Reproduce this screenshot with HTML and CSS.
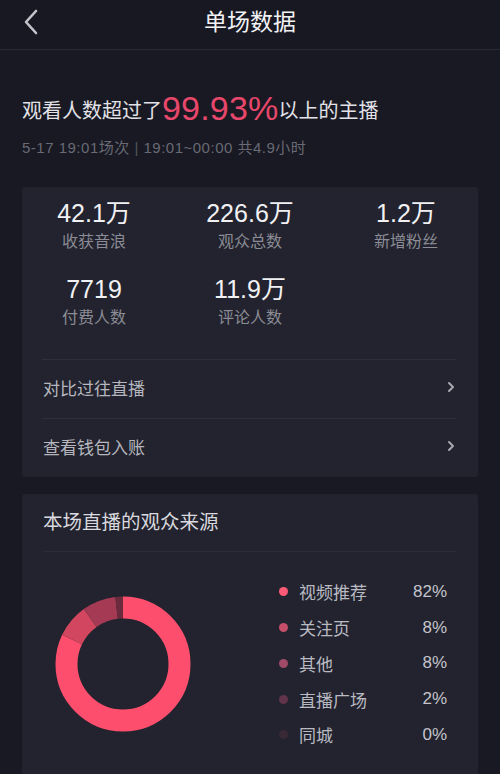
FILE: index.html
```html
<!DOCTYPE html>
<html lang="zh-CN">
<head>
<meta charset="utf-8">
<title>单场数据</title>
<link rel="stylesheet" href="styles.css">
</head>
<body>
<header class="topbar">
  <div class="back">
    <svg width="16" height="26" viewBox="0 0 16 26"><path d="M13 2 L3 13 L13 24" fill="none" stroke="#c4c5cc" stroke-width="2.6" stroke-linecap="round" stroke-linejoin="round"/></svg>
  </div>
  <h1 class="title">单场数据</h1>
  <div></div>
</header>

<section class="summary">
  <p class="headline">观看人数超过了<span class="pct">99.93%</span>以上的主播</p>
  <p class="sub">5-17 19:01场次 <span class="sep">|</span> 19:01~00:00 共4.9小时</p>
</section>

<section class="card">
  <div class="stats">
    <div class="stat"><div class="val">42.1万</div><div class="lab">收获音浪</div></div>
    <div class="stat"><div class="val">226.6万</div><div class="lab">观众总数</div></div>
    <div class="stat"><div class="val">1.2万</div><div class="lab">新增粉丝</div></div>
    <div class="stat"><div class="val">7719</div><div class="lab">付费人数</div></div>
    <div class="stat"><div class="val">11.9万</div><div class="lab">评论人数</div></div>
  </div>
  <div class="item"><span>对比过往直播</span>
    <svg class="chev" width="8" height="12" viewBox="0 0 8 12"><path d="M2 2 L6 6 L2 10" fill="none" stroke="#a7a8b0" stroke-width="2" stroke-linecap="round" stroke-linejoin="round"/></svg>
  </div>
  <div class="item"><span>查看钱包入账</span>
    <svg class="chev" width="8" height="12" viewBox="0 0 8 12"><path d="M2 2 L6 6 L2 10" fill="none" stroke="#a7a8b0" stroke-width="2" stroke-linecap="round" stroke-linejoin="round"/></svg>
  </div>
</section>

<section class="card card2">
  <div class="card-title">本场直播的观众来源</div>
  <div class="chart">
    <svg class="donut" width="136" height="136" viewBox="0 0 136 136">
      <g transform="rotate(-90 68 68)" fill="none" stroke-width="22">
        <circle cx="68" cy="68" r="56.5" stroke="#fd4f6d" stroke-dasharray="291.1 355" stroke-dashoffset="0"/>
        <circle cx="68" cy="68" r="56.5" stroke="#d2465f" stroke-dasharray="28.4 355" stroke-dashoffset="-291.1"/>
        <circle cx="68" cy="68" r="56.5" stroke="#a43a54" stroke-dasharray="28.4 355" stroke-dashoffset="-319.5"/>
        <circle cx="68" cy="68" r="56.5" stroke="#6c2b3d" stroke-dasharray="7.1 355" stroke-dashoffset="-347.9"/>
      </g>
    </svg>
    <ul class="legend">
      <li><i class="dot d1"></i><span class="name">视频推荐</span><span class="num">82%</span></li>
      <li><i class="dot d2"></i><span class="name">关注页</span><span class="num">8%</span></li>
      <li><i class="dot d3"></i><span class="name">其他</span><span class="num">8%</span></li>
      <li><i class="dot d4"></i><span class="name">直播广场</span><span class="num">2%</span></li>
      <li><i class="dot d5"></i><span class="name">同城</span><span class="num">0%</span></li>
    </ul>
  </div>
</section>
</body>
</html>
```

FILE: styles.css
```css
* { box-sizing: border-box; }
html, body { margin: 0; padding: 0; }
body {
  background: #181923;
  font-family: "Liberation Sans", "Noto Sans CJK SC", sans-serif;
  color: #e9e9ee;
  width: 500px;
  height: 774px;
  overflow: hidden;
}
.topbar {
  height: 50px;
  display: grid;
  grid-template-columns: 1fr auto 1fr;
  align-items: center;
  border-bottom: 1px solid #292a35;
  background: #171822;
}
.back { padding-left: 23px; display: flex; align-items: center; height: 26px; margin-top: -6px; }
.title {
  margin: 0;
  font-size: 23px;
  font-weight: normal;
  color: #f2f2f5;
  line-height: 30px;
  margin-top: -6px;
}
.summary { padding-left: 22px; }
.headline {
  margin: 38px 0 0;
  line-height: 40px;
  font-size: 20px;
  color: #e2e2e8;
}
.pct {
  font-size: 34px;
  color: #e6476a;
  font-weight: 500;
  vertical-align: -2px;
  letter-spacing: 0.2px;
}
.sub {
  margin: 7px 0 0;
  line-height: 20px;
  font-size: 15px;
  letter-spacing: 0.5px;
  color: #696a73;
}
.sep { color: #54555e; }
.card {
  margin: 29px 22px 0;
  background: #22232e;
  border-radius: 3px;
}
.stats {
  display: grid;
  grid-template-columns: repeat(3, 156px);
  justify-content: center;
  margin: 0 -6px;
  row-gap: 21px;
  padding-top: 11px;
}
.stat { text-align: center; }
.val {
  font-size: 25px;
  line-height: 30px;
  color: #f1f1f4;
}
.lab {
  margin-top: 3px;
  font-size: 16px;
  line-height: 22px;
  color: #8b8c95;
}
.item {
  margin: 0 22px 0 20px;
  height: 59px;
  border-top: 1px solid #2e2f3a;
  display: flex;
  align-items: center;
  justify-content: space-between;
  font-size: 17px;
  color: #b6b7bf;
  padding: 0 1px 4px;
}
.stats + .item { margin-top: 30px; }
.card2 { margin-top: 17px; padding-bottom: 40px; }
.card-title {
  margin: 0 22px 0 21px;
  padding: 14px 0 15px;
  line-height: 28px;
  font-size: 19.5px;
  color: #d9d9df;
  border-bottom: 1px solid #2c2d38;
}
.chart {
  display: flex;
  align-items: center;
  padding: 23px 31px 0 33px;
}
.donut { display: block; }
.legend {
  list-style: none;
  margin: 0 0 0 auto;
  padding: 0;
  width: 168px;
}
.legend li {
  display: flex;
  align-items: center;
  height: 35.75px;
  font-size: 17px;
  color: #b9bac2;
  padding-bottom: 2px;
}
.dot {
  width: 9px;
  height: 9px;
  border-radius: 50%;
  margin-right: 11px;
  flex: none;
}
.d1 { background: #fb5a76; }
.d2 { background: #c34f69; }
.d3 { background: #a04a65; }
.d4 { background: #61344a; }
.d5 { background: #392935; }
.name { flex: 1; }
.num { text-align: right; color: #c4c5cc; }
```
